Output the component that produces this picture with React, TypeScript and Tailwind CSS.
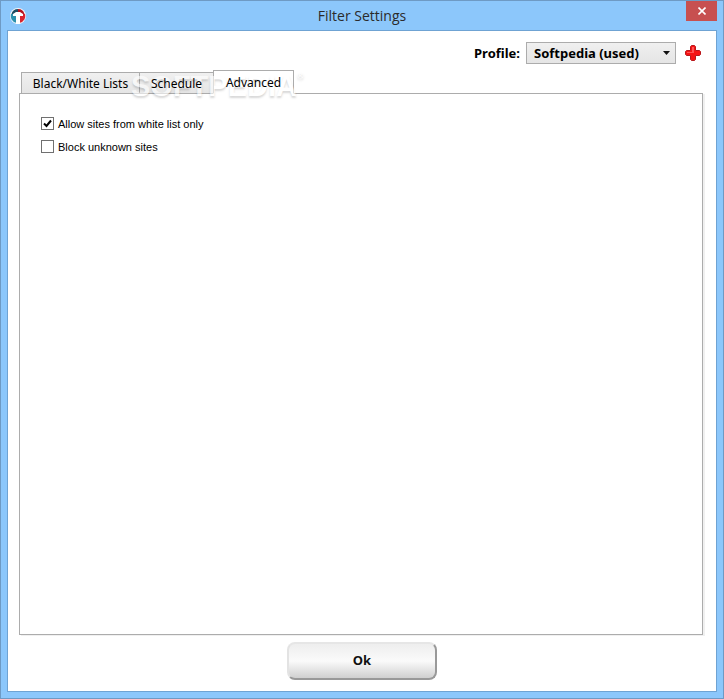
import { useState } from "react";

const tabs = [
  { id: "lists", label: "Black/White Lists", width: "w-[119px]" },
  { id: "schedule", label: "Schedule", width: "w-[75px]" },
  { id: "advanced", label: "Advanced", width: "w-[81px]" },
];

function AppIcon() {
  return (
    <svg className="w-4 h-4" viewBox="0 0 16 16" aria-hidden="true">
      <circle cx="8" cy="8" r="8" fill="#f4f6f8" />
      <path d="M8 1A7 7 0 0 0 1.500 6H8z" fill="#1d4d63" />
      <path d="M8 1v5h6.500A7 7 0 0 0 8 1z" fill="#b5121d" />
      <path d="M1 6h5v8.700A7 7 0 0 1 1 6z" fill="#2a90ad" />
      <path d="M10 6h5a7 7 0 0 1-5 8.700z" fill="#d8232e" />
      <path d="M3 6 6 4h4l3 2v2h-3v8H6V8H3z" fill="#fff" />
    </svg>
  );
}

function PlusIcon() {
  return (
    <svg className="w-4 h-4" viewBox="0 0 16 16" aria-hidden="true">
      <path
        d="M5.500 1.500 6.500.5h3l1 1v4h4l1 1v3l-1 1h-4v4l-1 1h-3l-1-1v-4h-4l-1-1v-3l1-1h4z"
        fill="#f51414"
        stroke="#b8181c"
      />
      <path d="M7 2h2v5H7zM2 7h7v1H2z" fill="#ff5555" />
    </svg>
  );
}

type CheckProps = {
  label: string;
  checked: boolean;
  onChange: (value: boolean) => void;
};

function Check({ label, checked, onChange }: CheckProps) {
  return (
    <label className="flex items-center gap-1 h-[23px] text-[11px] text-black font-['Liberation_Sans',sans-serif]">
      <span className="grid w-[13px] h-[13px]">
        <input
          type="checkbox"
          checked={checked}
          onChange={(e) => onChange(e.target.checked)}
          className="peer col-start-1 row-start-1 appearance-none w-[13px] h-[13px] border border-[#707070] bg-white"
        />
        <svg
          className="col-start-1 row-start-1 invisible peer-checked:visible pointer-events-none"
          viewBox="0 0 13 13"
          aria-hidden="true"
        >
          <path d="M3 6.500 5.500 9 10 3.500" fill="none" stroke="#000" strokeWidth="2" />
        </svg>
      </span>
      <span className="pt-px">{label}</span>
    </label>
  );
}

export default function App() {
  const [activeTab, setActiveTab] = useState("advanced");
  const [whiteOnly, setWhiteOnly] = useState(true);
  const [blockUnknown, setBlockUnknown] = useState(false);

  return (
    <div className="flex flex-col min-h-screen px-[6px] pb-[6px] border border-[#6e9ac4] bg-[#8cc7fb] font-['Tahoma','Noto_Sans',sans-serif]">
      {/* Title bar */}
      <header className="grid grid-cols-[48px_1fr_48px] h-[29px] -mx-[3px] items-center">
        <span className="pl-[6px]">
          <AppIcon />
        </span>
        <h1 className="text-center text-[14px] leading-5 text-[#2b2b2b] font-['Open_Sans',sans-serif]">
          Filter Settings
        </h1>
        <button
          aria-label="Close"
          className="flex justify-center items-center justify-self-end self-start w-[31px] h-5 mr-[3px] bg-[#c75050]"
        >
          <svg className="w-2 h-2" viewBox="0 0 8 8" aria-hidden="true">
            <path d="m.5.5 7 7m0-7-7 7" stroke="#fff" strokeWidth="1.600" />
          </svg>
        </button>
      </header>

      <main className="flex flex-col flex-1 p-[11px] border border-[#6fa3d3] bg-white">
        {/* Profile picker */}
        <div className="flex justify-end items-center h-[22px] mb-[6px]">
          <label htmlFor="profile" className="mr-[6px] pt-px text-[13px] font-bold text-black">
            Profile:
          </label>
          <div className="grid items-center w-[150px]">
            <select
              id="profile"
              className="col-start-1 row-start-1 appearance-none w-full h-[22px] pt-px pl-[7px] border border-[#acacac] bg-linear-to-b from-[#f0f0f0] to-[#e5e5e5] text-[13px] font-bold text-black"
            >
              <option>Softpedia (used)</option>
            </select>
            <svg
              className="col-start-1 row-start-1 justify-self-end w-[7px] h-1 mr-[6px] pointer-events-none"
              viewBox="0 0 7 4"
              aria-hidden="true"
            >
              <path d="M0 0h7L3.500 4z" fill="#111" />
            </svg>
          </div>
          <button aria-label="Add profile" className="ml-[9px] mr-1">
            <PlusIcon />
          </button>
        </div>

        {/* Tabs, with the brand mark between their faces and their labels */}
        <div role="tablist" className="relative z-10 flex items-end h-6 pl-[2px] -mb-px">
          {tabs.map((tab) => (
            <button
              key={tab.id}
              role="tab"
              aria-selected={activeTab === tab.id}
              onClick={() => setActiveTab(tab.id)}
              className={`${tab.width} not-first:-ml-px pt-px border border-[#acacac] text-[12px] leading-4 text-black ${
                activeTab === tab.id
                  ? "h-6 border-b-white bg-white"
                  : "h-[22px] bg-linear-to-b from-[#f0f0f0] to-[#e5e5e5]"
              }`}
            >
              <span className="relative z-20">{tab.label}</span>
            </button>
          ))}
          <span
            aria-hidden="true"
            className="absolute left-[112px] top-0 z-10 flex items-start text-[29px] leading-8 font-bold text-white opacity-60 pointer-events-none font-['Liberation_Sans',sans-serif] [text-shadow:0_2px_2px_rgb(0_0_0/0.25)]"
          >
            SOFTPEDIA
            <span className="text-[9px] leading-3">®</span>
          </span>
        </div>
        <section
          role="tabpanel"
          className="flex-1 mr-[2px] pt-[18px] pl-[21px] border border-[#acacac] shadow-[2px_1px_0_#f0f0f0]"
        >
          <Check
            label="Allow sites from white list only"
            checked={whiteOnly}
            onChange={setWhiteOnly}
          />
          <Check label="Block unknown sites" checked={blockUnknown} onChange={setBlockUnknown} />
        </section>

        <button className="self-center w-[150px] h-[38px] mt-[7px] rounded-lg border-2 border-t-[#e6e6e6] border-l-[#e3e3e3] border-r-[#999] border-b-[#999] bg-linear-to-b from-[#eeeeee] via-[#fafafa] to-[#d0d0d0] text-[13px] font-bold text-[#111]">
          Ok
        </button>
      </main>
    </div>
  );
}
